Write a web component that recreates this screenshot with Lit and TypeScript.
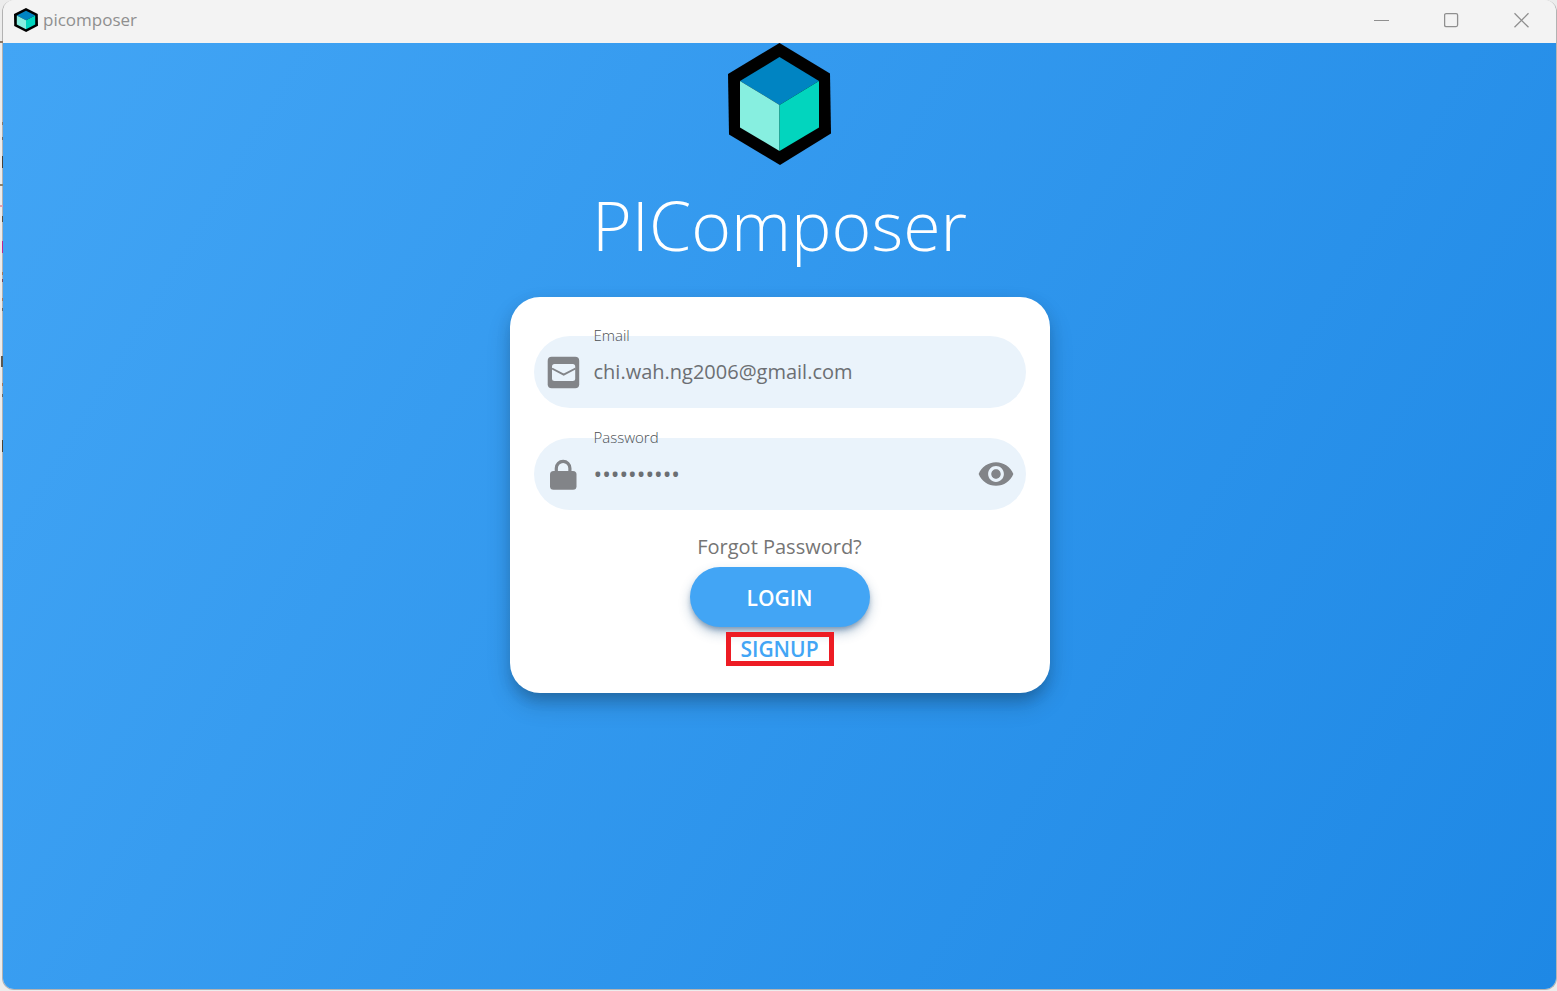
import { LitElement, html, css, svg } from "lit";
import { customElement, state } from "lit/decorators.js";

/** Hexagonal cube mark used in the title bar and above the heading. */
@customElement("cube-logo")
export class CubeLogo extends LitElement {
  static styles = css`
    :host {
      display: block;
    }
    .mark {
      display: block;
      width: 100%;
      height: 100%;
    }
  `;

  render() {
    return html`
      <svg class="mark" viewBox="0 0 103 122" preserveAspectRatio="none" aria-hidden="true">
        <path fill="#000" d="M51.5 0 102 30.500 103 90.500 52 122 1 91.500 0 31Z" />
        <path fill="#0084c2" d="M51.500 14 91 38 51.500 62 12 38Z" />
        <path fill="#87efe0" d="M12 38 51.500 62V108L12 84.500Z" />
        <path fill="#02d5be" d="M91 38 51.500 62V108L91 84.500Z" />
      </svg>
    `;
  }
}

/** Marks of the window behind: x, y, width, height, colour. */
const BEHIND_LEFT: Array<[number, number, number, number, string]> = [
  [0, 41, 3, 2, "#8a7868"],
  [2, 122, 1, 3, "#8a7868"],
  [2, 137, 1, 3, "#6f675f"],
  [2, 156, 1, 12, "#4a4238"],
  [0, 184, 3, 2, "#8d836c"],
  [0, 205, 3, 2, "#e0a0ae"],
  [2, 216, 1, 6, "#5b5040"],
  [2, 241, 1, 12, "#c0288e"],
  [2, 272, 1, 3, "#a87858"],
  [2, 279, 1, 3, "#7a4a58"],
  [2, 298, 1, 3, "#a87858"],
  [2, 308, 1, 3, "#6f675f"],
  [1, 356, 2, 11, "#5c5850"],
  [2, 383, 1, 3, "#a87858"],
  [2, 394, 1, 3, "#6f675f"],
  [2, 440, 1, 12, "#4f4434"],
];

@customElement("app-root")
export class AppRoot extends LitElement {
  static styles = css`
    :host {
      display: block;
      min-height: 100vh;
      font-family: "Open Sans", "Noto Sans", sans-serif;
      color: #6c6f73;
    }
    * {
      box-sizing: border-box;
    }
    .desktop {
      display: grid;
      position: relative;
      min-height: 100vh;
      padding: 0 0 1px 2px;
      background: #ececec;
    }
    .behind {
      position: absolute;
      left: 0;
      top: 0;
      width: 3px;
      height: 480px;
    }
    .window {
      display: flex;
      flex-direction: column;
      overflow: hidden;
      border: solid #b2b2b2;
      border-width: 0 1px 1px 1px;
      border-radius: 12px;
      background: #f3f3f3;
    }
    .titlebar {
      display: flex;
      align-items: center;
      height: 43px;
      padding: 0 11px 3px;
      background: #f3f3f3;
      color: #8f8f8f;
    }
    .app-icon {
      width: 24px;
      height: 24px;
    }
    .app-name {
      flex: 1;
      padding-left: 5px;
      font-size: 17px;
      line-height: 24px;
    }
    .controls {
      display: flex;
      gap: 24px;
    }
    button {
      margin: 0;
      padding: 0;
      border: 0;
      background: none;
      color: inherit;
      font: inherit;
      cursor: pointer;
    }
    .control {
      display: grid;
      place-items: center;
      width: 46px;
      height: 32px;
    }
    .content {
      flex: 1;
      display: flex;
      flex-direction: column;
      align-items: center;
      background: linear-gradient(121deg, #42a5f5, #1e88e5);
    }
    .logo {
      width: 103px;
      height: 122px;
    }
    .heading {
      margin: 12px 0 24px;
      color: #fff;
      font-size: 68px;
      font-weight: 300;
      line-height: 96px;
    }
    .card {
      display: flex;
      flex-direction: column;
      align-items: center;
      width: 540px;
      max-width: 100%;
      padding: 39px 24px 27px;
      border-radius: 30px;
      background: #fff;
      box-shadow:
        0 12px 14px -6px rgba(0, 0, 0, 0.12),
        0 12px 24px rgba(0, 0, 0, 0.16),
        0 5px 16px rgba(0, 0, 0, 0.08);
    }
    .field {
      position: relative;
      display: flex;
      align-items: center;
      width: 100%;
      height: 72px;
      margin-bottom: 30px;
      padding: 0 12px;
      border-radius: 36px;
      background: #eaf3fb;
      color: #828488;
    }
    .field:last-of-type {
      margin-bottom: 23px;
    }
    .field-icon {
      flex: none;
      width: 36px;
      height: 36px;
    }
    .label {
      position: absolute;
      left: 60px;
      top: -11px;
      color: #4c4f52;
      font-size: 15px;
      font-weight: 300;
      line-height: 20px;
    }
    .input {
      flex: 1;
      min-width: 0;
      height: 48px;
      margin: 0 12px;
      padding: 0 0 2px;
      border: 0;
      outline: 0;
      background: none;
      color: #6c6f73;
      font: inherit;
      font-size: 20px;
    }
    .input[type="password"] {
      padding: 0;
      font-size: 23px;
    }
    .eye {
      flex: none;
      width: 36px;
      height: 36px;
    }
    svg {
      display: block;
    }
    .forgot {
      color: #757575;
      font-size: 20px;
      line-height: 27px;
      text-decoration: none;
    }
    .login {
      width: 180px;
      height: 60px;
      margin: 7px 0 5px;
      padding-top: 2px;
      border-radius: 30px;
      background: #42a5f5;
      box-shadow:
        0 4px 5px -1px rgba(30, 80, 130, 0.4),
        0 6px 12px rgba(30, 80, 130, 0.3);
      color: #fff;
      font-size: 21px;
      font-weight: 600;
    }
    .signup {
      width: 108px;
      height: 34px;
      border: 5px solid #ed1c24;
      color: #42a5f5;
      font-size: 21px;
      font-weight: 600;
      line-height: 24px;
    }
  `;

  @state() private showPassword = false;

  private togglePassword() {
    this.showPassword = !this.showPassword;
  }

  render() {
    return html`
      <div class="desktop">
        <div class="window">
          <header class="titlebar">
            <cube-logo class="app-icon"></cube-logo>
            <span class="app-name">picomposer</span>
            <div class="controls">
              <button class="control" aria-label="Minimize">
                <svg width="16" height="16" fill="none" stroke="#8f8f8f">
                  <path d="M0 8.500h15" />
                </svg>
              </button>
              <button class="control" aria-label="Maximize">
                <svg width="16" height="16" fill="none" stroke="#8f8f8f">
                  <rect x=".6" y="1.600" width="13" height="13" rx="1.500" stroke-width="1.300" />
                </svg>
              </button>
              <button class="control" aria-label="Close">
                <svg width="16" height="16" fill="none" stroke="#8f8f8f">
                  <path stroke-width="1.300" d="m.5 1.300 14 14M14.500 1.300.5 15.300" />
                </svg>
              </button>
            </div>
          </header>
          <main class="content">
            <cube-logo class="logo"></cube-logo>
            <h1 class="heading">PIComposer</h1>
            <form class="card" @submit=${(e: Event) => e.preventDefault()}>
              <div class="field">
                <svg class="field-icon" viewBox="0 0 36 36" fill="currentColor" aria-hidden="true">
                  <rect x="1.700" y="2.800" width="31.500" height="31.500" rx="4" />
                  <rect x="6" y="10" width="23.200" height="17" rx="2.500" fill="#eaf3fb" />
                  <path d="M6 14.500 17.700 20.700 29.500 14.500" fill="none" stroke="currentColor" stroke-width="1.900" />
                </svg>
                <label class="label" for="email">Email</label>
                <input class="input" id="email" type="email" value="chi.wah.ng2006@gmail.com" />
              </div>
              <div class="field">
                <svg class="field-icon" viewBox="0 0 36 36" fill="currentColor" aria-hidden="true">
                  <path fill="none" stroke="currentColor" stroke-width="3.200" d="M10.300 17V12.200a6.800 6.800 0 0 1 13.600 0V17" />
                  <rect x="4" y="15" width="26.500" height="18.800" rx="3.500" />
                </svg>
                <label class="label" for="password">Password</label>
                <input
                  class="input"
                  id="password"
                  type=${this.showPassword ? "text" : "password"}
                  value="composer12"
                />
                <button class="eye" type="button" aria-label="Show password" @click=${this.togglePassword}>
                  <svg width="36" height="36" viewBox="0.600 0.600 22.800 22.800" fill="currentColor">
                    <path
                      d="M12 4.500C7 4.500 2.730 7.610 1 12c1.730 4.390 6 7.500 11 7.500s9.270-3.110 11-7.500c-1.730-4.390-6-7.500-11-7.500zM12 17c-2.760 0-5-2.240-5-5s2.240-5 5-5 5 2.240 5 5-2.240 5-5 5zm0-8c-1.660 0-3 1.340-3 3s1.340 3 3 3 3-1.340 3-3-1.340-3-3-3z"
                    />
                  </svg>
                </button>
              </div>
              <a class="forgot" href="#forgot">Forgot Password?</a>
              <button class="login" type="submit">LOGIN</button>
              <button class="signup" type="button">SIGNUP</button>
            </form>
          </main>
        </div>
        <svg class="behind" viewBox="0 0 3 480" aria-hidden="true">
          ${BEHIND_LEFT.map(
            ([x, y, w, h, c]) => svg`<rect x=${x} y=${y} width=${w} height=${h} fill=${c} />`,
          )}
        </svg>
      </div>
    `;
  }
}
